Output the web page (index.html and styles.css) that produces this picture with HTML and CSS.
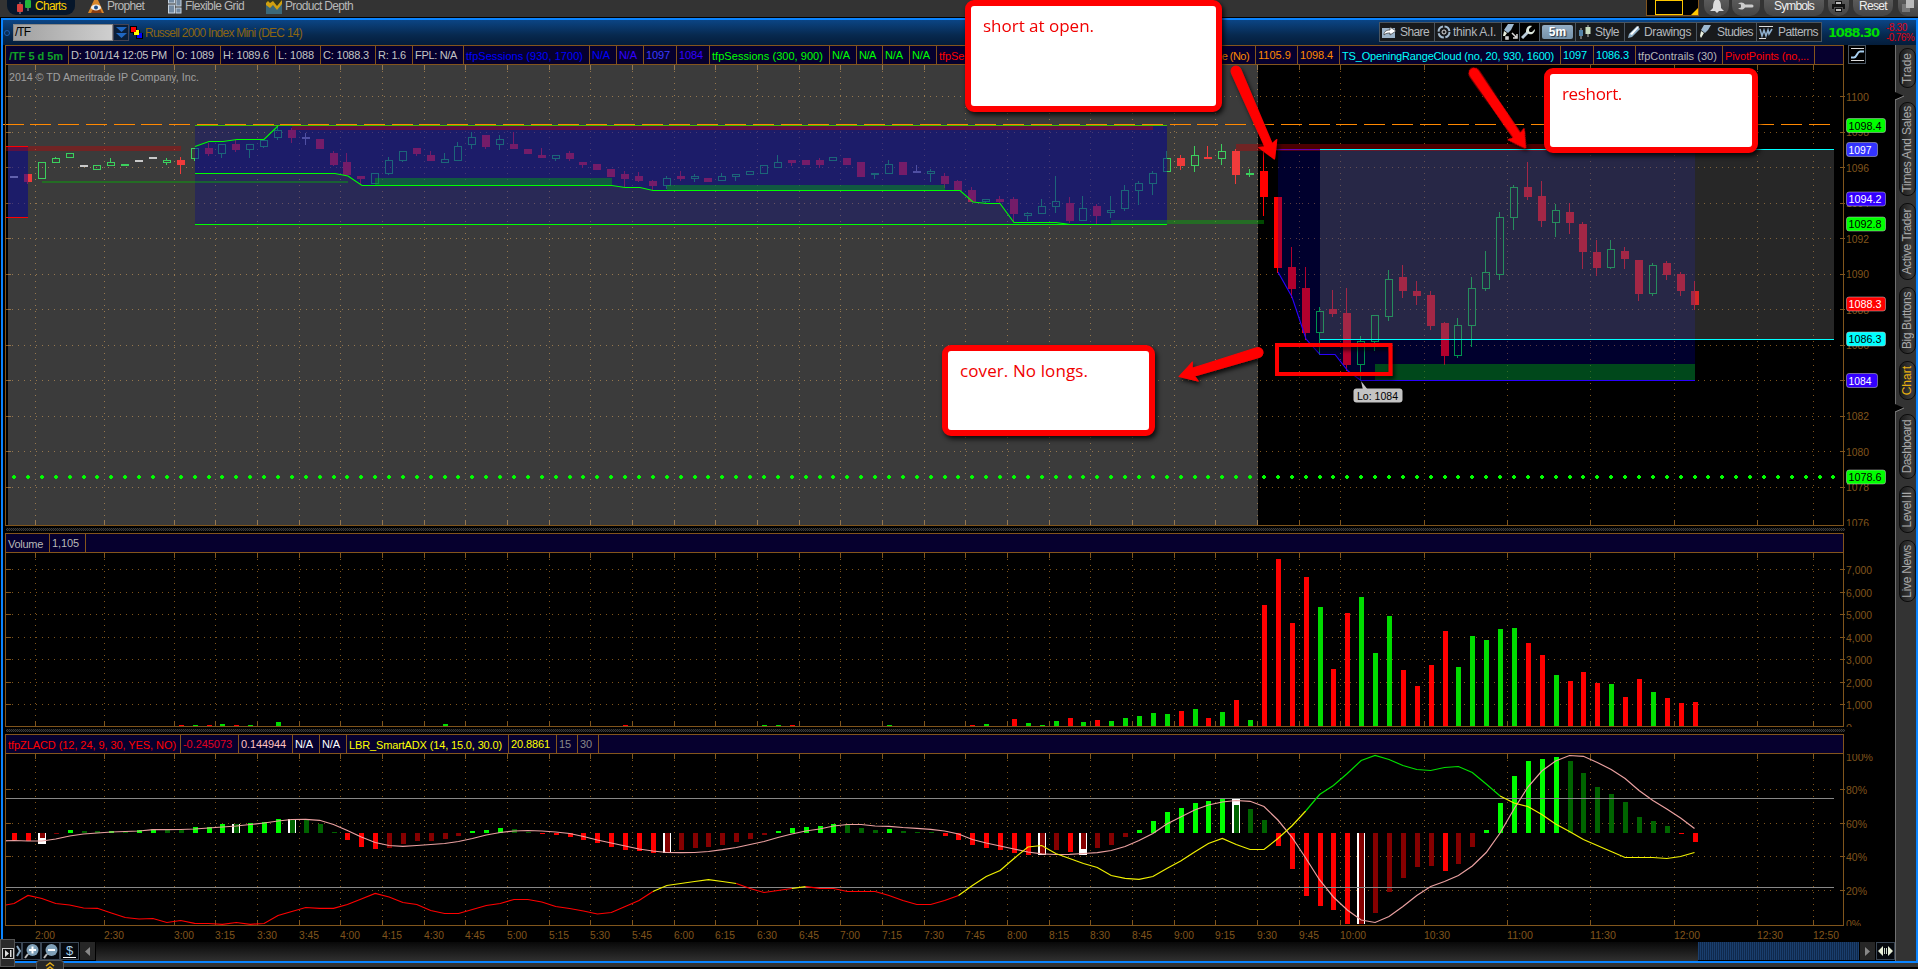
FILE: index.html
```html
<!DOCTYPE html>
<html lang="en">
<head>
<meta charset="utf-8">
<title>Charts - /TF</title>
<link rel="stylesheet" href="styles.css">
</head>
<body>
<nav class="topbar">
  <div class="tab tab-active">
    <svg width="16" height="14" viewBox="0 0 16 14"><path d="M4 2v12M12 0v11" stroke="#999"/><rect x="1" y="4" width="6" height="8" rx="1" fill="#d9403c"/><rect x="9" y="0" width="6" height="8" rx="1" fill="#22b43a"/></svg>
    <span data-w="31">Charts</span>
  </div>
  <div class="tab tab-prophet">
    <svg width="16" height="14" viewBox="0 0 16 14"><path d="M6 0h4l6 13H0z" fill="#d8862a"/><path d="M3 13l2-4h7l2 4z" fill="#8a3d10"/><ellipse cx="8" cy="7.500" rx="5" ry="3" fill="#eee"/><circle cx="8" cy="7.500" r="2" fill="#1a4a86"/></svg>
    <span data-w="37">Prophet</span>
  </div>
  <div class="tab tab-grid">
    <svg width="14" height="14" viewBox="0 0 14 14"><g fill="#7288a0" stroke="#c8d4e0"><rect x=".5" y="-2" width="6" height="5"/><rect x="8" y="-2" width="5" height="8"/><rect x=".5" y="5" width="6" height="8"/><rect x="8" y="8" width="5" height="5"/></g></svg>
    <span data-w="59">Flexible Grid</span>
  </div>
  <div class="tab tab-depth">
    <svg width="16" height="14" viewBox="0 0 16 14"><rect width="16" height="14" fill="#3c6878"/><path d="M0 0h16v3l-5 5-4-5-4 3-3-2z" fill="#33361c"/><path d="M0 3l2-2 2 2 3-2 4 5 5-6v4l-5 6-4-5-3 3-4-3z" fill="#d0a010"/></svg>
    <span data-w="68">Product Depth</span>
  </div>
  <div class="topbar-right">
    <div class="layout-box"><i></i><svg width="7" height="7"><path d="M7 0v7H0z" fill="#ffc800"/></svg></div>
    <div class="pill bell"><svg width="14" height="13" viewBox="0 0 14 13"><path d="M5 0h4c2 2 2 6 2 8l3 3H0l3-3c0-2 0-6 2-8zM5 11h4l-2 2z" fill="#ddd"/></svg></div>
    <div class="pill wrench"><svg width="18" height="8" viewBox="0 0 18 8"><path d="M1 1.500c3-2 6-1 7 1h7a1.500 1.500 0 010 3H8c-1 2-4 3-7 1l3-1V2.500z" fill="#ccc"/></svg></div>
    <div class="pill symbols"><span data-w="40">Symbols</span></div>
    <div class="pill printer"><svg width="13" height="11" viewBox="0 0 13 11"><path d="M3 0h7v3h3v5h-2V6H2v2H0V3h3zM3 7h7v4H3z" fill="#111"/><path d="M4 1h5v2H4zM4 8h5v2H4z" fill="#bbb"/></svg></div>
    <div class="pill reset"><span data-w="28">Reset</span></div>
    <div class="pill copy"><svg width="12" height="12" viewBox="0 0 12 12"><rect x="0" y="4" width="8" height="8" fill="#777"/><rect x="4" y="0" width="8" height="8" fill="#bbb"/></svg></div>
  </div>
</nav>

<main class="frame">
  <header class="titlebar">
    <i class="link-dot"></i>
    <div class="symbol-input"><span data-w="15">/TF</span></div>
    <div class="symbol-drop"><svg width="11" height="11" viewBox="0 0 11 11"><path d="M0 0h11L5.500 5zM0 6h11l-5.500 5z" fill="#1f66c0"/></svg></div>
    <svg class="squares" width="13" height="13" viewBox="0 0 13 13"><path d="M0 0h7v4h3v3h3v6H6V9H3V7H0z" fill="#000"/><path d="M1 1h5v5H1z" fill="#f00"/><path d="M6 4h3v5H4V6h2z" fill="#ff0"/><path d="M9 7h3v5H7V9h2z" fill="#00f"/></svg>
    <span class="instrument" data-w="157">Russell 2000 Index Mini (DEC 14)</span>
    <div class="toolbar">
      <div class="btn b-share"><svg width="15" height="13" viewBox="0 0 15 13"><path d="M0 2h13v10H0z" fill="#9db4c8"/><path d="M2 9c0-4 3-5 6-5V1l6 4-6 4V7C6 7 4 7 2 9z" fill="#fff" stroke="#333" stroke-width=".7"/></svg><span data-w="29">Share</span></div>
      <div class="btn b-think"><svg width="14" height="14" viewBox="0 0 14 14"><circle cx="7" cy="7" r="5.500" fill="none" stroke="#a5bcd0" stroke-width="2" stroke-dasharray="7 1.600"/><circle cx="7" cy="7" r="2" fill="#222" stroke="#ddd"/></svg><span data-w="43">think A.I.</span></div>
      <div class="btn b-icon b-flask"><svg width="15" height="16" viewBox="0 0 15 16"><path d="M5 0l6 0-3 6-3 3-4-3z" fill="#9cb8d0"/><path d="M1 7l3 2-2 3H0z" fill="#e9f0e0"/><path d="M3 15v-2h2v2zM9 9l4 4M14 10v4h-4" stroke="#ddd" stroke-width="1.500" fill="none"/></svg></div>
      <div class="btn b-icon b-key"><svg width="14" height="14" viewBox="0 0 14 14"><path d="M1 13l7-7" stroke="#b8cad8" stroke-width="3"/><path d="M11 1L8 4v3h3l3-3c0 4-3 6-6 5L5 7c0-4 2-7 6-6z" fill="#dde7dd"/></svg></div>
      <div class="btn b-time"><b>5m</b></div>
      <div class="btn b-style"><svg width="13" height="14" viewBox="0 0 13 14"><path d="M3 3v11M10 0v12" stroke="#bbb"/><rect x="1" y="5" width="4" height="6" fill="#5684a8"/><rect x="7.500" y="2" width="5" height="7" fill="#c8dcc0"/></svg><span data-w="24">Style</span></div>
      <div class="btn b-draw"><svg width="14" height="14" viewBox="0 0 14 14"><path d="M1 13l1-4 8-8 3 3-8 8z" fill="#8fb0c8"/><path d="M3 9l8-8 1 1-7 8z" fill="#fff"/></svg><span data-w="47">Drawings</span></div>
      <div class="btn b-stud"><svg width="14" height="14" viewBox="0 0 14 14"><path d="M5 0h7L9 5 6 8 2 5z" fill="#9cb8d0"/><path d="M2 6l3 2-3 5-1-2z" fill="#e9f0e0"/></svg><span data-w="36">Studies</span></div>
      <div class="btn b-patt"><svg width="14" height="13" viewBox="0 0 14 13"><path d="M0 .5h14M0 12.500h7" stroke="#ddd"/><path d="M1 3l2 7 2-6 2 6 2-6 1 4 3-5" fill="none" stroke="#8fb0d0" stroke-width="1.500"/></svg><span data-w="40">Patterns</span></div>
    </div>
    <b class="last" data-w="51">1088.30</b>
    <div class="change"><span data-w="21">-8.30</span><span data-w="28">-0.76%</span></div>
  </header>

  <div class="workspace">
    <section class="panes">
      <div class="strip"><div class="cells" id="head-price"></div>
        <div class="scale-btn"><svg width="13" height="15" viewBox="0 0 13 15"><path d="M0 1.500h13M0 13.500h13" stroke="#ddd"/><path d="M0 10.500h3c3 0 3-6 6-6h4" fill="none" stroke="#a8d0f0" stroke-width="2"/></svg></div>
      </div>
      <svg class="pane" id="price" width="1892" height="461" viewBox="3 65 1892 461"></svg>
      <div class="divider"></div>
      <div class="strip"><div class="cells" id="head-volume"></div></div>
      <svg class="pane" id="volume" width="1892" height="174" viewBox="3 553 1892 174"></svg>
      <div class="divider"></div>
      <div class="strip"><div class="cells" id="head-osc"></div></div>
      <svg class="pane" id="osc" width="1892" height="172" viewBox="3 754 1892 172"></svg>
      <svg class="pane" id="times" width="1892" height="16" viewBox="3 926 1892 16"></svg>
      <div class="scroller">
        <div class="sbtn first"><svg width="18" height="16" viewBox="0 0 18 16"><path d="M13 3l3 5-3 5" fill="none" stroke="#89a8c0" stroke-width="2"/></svg></div>
        <div class="sbtn"><svg width="16" height="16" viewBox="0 0 16 16"><circle cx="8.500" cy="7" r="6" fill="#7fa0b8"/><path d="M8.500 3.500v7M5 7h7" stroke="#fff" stroke-width="2"/><path d="M4 11l-3 4" stroke="#bbb" stroke-width="2"/></svg></div>
        <div class="sbtn"><svg width="16" height="16" viewBox="0 0 16 16"><circle cx="8.500" cy="7" r="6" fill="#7fa0b8"/><path d="M5 7h7" stroke="#fff" stroke-width="2"/><path d="M4 11l-3 4" stroke="#bbb" stroke-width="2"/></svg></div>
        <div class="sbtn dollar"><span>$</span></div>
        <div class="arrow"><svg width="5" height="9"><path d="M5 0v9L0 4.500z" fill="#888"/></svg></div>
        <div class="track"></div>
        <div class="thumb"></div>
        <div class="arrow"><svg width="5" height="9"><path d="M0 0v9l5-4.500z" fill="#888"/></svg></div>
        <div class="sbtn"><svg width="15" height="12" viewBox="0 0 15 12"><path d="M0 6l5-5v10zM15 6l-5-5v10z" fill="#e8f0d8"/><path d="M6.500 3v6M8.500 3v6" stroke="#ccd8c8"/></svg></div>
      </div>
    </section>
    <aside class="side">
      <div class="side-tab t-trade"><span>Trade</span></div>
      <svg class="notch" width="10" height="8"><path d="M0 0l9 4-9 4z" fill="#000"/><path d="M0 8l9-4" stroke="#888"/></svg>
      <div class="side-tab t-times"><span>Times And Sales</span></div>
      <div class="side-tab t-active"><span>Active Trader</span></div>
      <div class="side-tab t-big"><span>Big Buttons</span></div>
      <div class="side-tab t-chart"><span>Chart</span></div>
      <svg class="notch" width="10" height="8"><path d="M0 0l9 4-9 4z" fill="#000"/><path d="M0 8l9-4" stroke="#888"/></svg>
      <div class="side-tab t-dash"><span>Dashboard</span></div>
      <div class="side-tab t-level"><span>Level II</span></div>
      <div class="side-tab t-live"><span>Live News</span></div>
    </aside>
  </div>
</main>
<footer class="footer"></footer>

<div class="nub"><svg width="12" height="11" viewBox="0 0 12 11"><rect x=".5" y=".5" width="11" height="10" fill="#111" stroke="#ccc"/><path d="M3 2v7l4-3.500zM8 2h1.500v7H8z" fill="#ddd"/></svg></div>
<div class="drawer"><svg width="10" height="8" viewBox="0 0 10 8"><path d="M1 4l4-3 4 3M1 8l4-3 4 3" fill="none" stroke="#e0a818" stroke-width="1.500"/></svg></div>

<svg class="ink" id="ink" width="1918" height="969" viewBox="0 0 1918 969"></svg>
<div class="note note-open"><span data-w="111">short at open.</span></div>
<div class="note note-cover"><span data-w="128">cover. No longs.</span></div>
<div class="note note-reshort"><span data-w="60">reshort.</span></div>
<script src="script.js"></script>
</body>
</html>
```
FILE: styles.css
```css
* { box-sizing: border-box; }
body {
  margin: 0; width: 1918px; height: 969px; overflow: hidden; position: relative;
  display: flex; flex-direction: column; background: #000;
  font: 11px/14px "Liberation Sans", Arial, sans-serif; color: #c4c4c4;
}
svg { display: block; flex: none; }
span, b { white-space: pre; }

.topbar { height: 18px; flex: none; display: flex; align-items: flex-start; background: #333; border-bottom: 1px solid #000; padding-left: 7px; font-size: 12px; line-height: 13px; color: #b8b8b8; }
.tab { display: flex; height: 15px; gap: 3px; }
.tab-active { width: 68px; padding-left: 9px; background: #06162a; border-radius: 0 0 9px 9px; color: #ffd200; }
.tab-prophet { width: 93px; padding-left: 13px; }
.tab-grid { width: 98px; }
.topbar-right { margin-left: auto; display: flex; color: #eee; }
.layout-box { width: 53px; height: 16px; margin-right: 5px; background: #000; border: 1px solid #84551c; border-top: 0; display: flex; justify-content: flex-end; align-items: flex-end; }
.layout-box i { width: 28px; height: 15px; border: 1px solid #ffc800; margin-right: 8px; }
.pill { height: 16px; background: linear-gradient(#5a5a5a, #454545); border-radius: 0 0 10px 10px; display: flex; justify-content: center; }
.bell { width: 25px; margin-right: 3px; }
.wrench { width: 28px; margin-right: 4px; padding-top: 2px; }
.symbols { width: 60px; margin-right: 4px; border-radius: 0 0 9px 9px; }
.printer { width: 21px; margin-right: 4px; padding-top: 1px; }
.reset { width: 40px; margin-right: 5px; }
.copy { width: 20px; border-radius: 0 0 0 9px; }

.frame { height: 945px; flex: none; margin-left: 1px; border: 2px solid #0a84ff; width: 1917px; background: #000; }
.titlebar { height: 25px; display: flex; align-items: center; background: linear-gradient(#0b4585, #07294f 60%, #041d3b); }
.link-dot { width: 6px; height: 6px; margin: 0 3px 0 1px; border: 1px solid #1c5fb4; border-radius: 50%; }
.symbol-input { width: 100px; height: 17px; background: linear-gradient(90deg, #a0a0a0, #cfcfcf); border: 1px solid #888; color: #000; font: 12px/15px "Liberation Sans", Arial, sans-serif; padding-left: 1px; }
.symbol-drop { width: 16px; height: 17px; background: #0a1e38; border: 1px solid #445; display: flex; align-items: center; justify-content: center; }
.squares { margin: 0 2px 0 1px; }
.instrument { color: #8c6512; font-size: 12px; }
.toolbar { margin-left: auto; display: flex; height: 20px; margin-bottom: 1px; }
.btn { border: 1px solid #4a5560; background: #181a1c; display: flex; align-items: center; color: #b4b8bc; font-size: 12px; padding-left: 2px; gap: 3px; }
.btn:not(:last-child) { border-right: 0; }
.b-share { width: 55px; }
.b-think { width: 67px; gap: 2px; }
.b-icon { width: 18px; padding-left: 1px; background: #000; }
.b-key { width: 20px; }
.b-time { width: 36px; padding: 0 2px; }
.b-time b { width: 31px; height: 14px; border-radius: 2px; background: linear-gradient(#93adc4, #7592aa); color: #fff; text-align: center; line-height: 14px; font-size: 12px; text-shadow: 1px 1px 1px #234; }
.b-style { width: 49px; gap: 4px; }
.b-draw { width: 72px; }
.b-stud { width: 60px; gap: 4px; }
.b-patt { width: 66px; gap: 5px; }
.last { margin: 0 7px 0 6px; color: #00dc00; font: bold 13px/20px "DejaVu Sans", sans-serif; width: 51px; }
.change { width: 30px; color: #e00010; font-size: 10px; line-height: 10px; display: flex; flex-direction: column; align-items: flex-start; }

.workspace { display: flex; height: 916px; }
.panes { width: 1892px; display: flex; flex-direction: column; }
.strip { height: 20px; flex: none; display: flex; padding-left: 2px; }
.cells { width: 1839px; height: 20px; display: flex; background: #06002e; border: 1px solid #84551c; overflow: hidden; }
.cell { flex: none; height: 18px; line-height: 19px; border-right: 1px solid #84551c; padding-left: 2px; overflow: hidden; }
.cell.study { line-height: 20px; }
.cell.strong { font-weight: bold; padding-left: 3px; line-height: 20px; }
.scale-btn { margin-left: 4px; width: 18px; height: 19px; border: 1px solid #4a5560; display: flex; align-items: center; justify-content: center; }
.divider { height: 7px; width: 1842px; flex: none; border: 2px solid #000; border-left: 3px solid #000; border-right: 0; background: repeating-conic-gradient(#3c3c3c 0 25%, #101010 0 50%) 0 0 / 2px 2px; }
.pane { font-size: 11px; }

.scroller { height: 19px; display: flex; background: #000; }
.sbtn { width: 19px; height: 18px; border: 1px solid #3a4654; background: #06090e; display: flex; align-items: center; justify-content: center; }
.dollar span { font-size: 13px; line-height: 13px; color: #a8d0ea; border-bottom: 1px solid #fff; padding: 0 3px; }
.arrow { width: 15px; height: 18px; margin: 0 1px; background: #262626; display: flex; align-items: center; justify-content: center; }
.track { flex: 1; background: linear-gradient(#080808, #303030); }
.thumb { width: 161px; height: 18px; background: repeating-linear-gradient(90deg, #1a3f6e 0 1px, #10294c 1px 2px); }

.side { width: 21px; background: #333; border-left: 1px solid #707070; padding-top: 3px; display: flex; flex-direction: column; align-items: flex-end; }
.side-tab { width: 17px; border: 1px solid #0c0c0c; border-radius: 8px; background: linear-gradient(90deg, #1a1a1a, #3c3c3c 80%, #2a2a2a); display: flex; align-items: center; justify-content: center; margin-bottom: 7px; color: #a8a8a8; flex: none; }
.side-tab span { writing-mode: vertical-rl; transform: rotate(180deg); font-size: 12px; line-height: 15px; }
.notch { align-self: flex-start; margin: -3px 0 2px -1px; }
.t-trade { height: 40px; } .t-times { height: 94px; } .t-active { height: 77px; } .t-big { height: 67px; }
.t-chart { height: 39px; } .t-chart span { color: #e8b010; }
.t-dash { height: 65px; } .t-level { height: 47px; } .t-live { height: 62px; }
.t-times span { letter-spacing: -.2px; } .t-active span { letter-spacing: -.4px; } .t-big span { letter-spacing: -.4px; }
.t-dash span { letter-spacing: -.6px; } .t-level span { letter-spacing: -.4px; } .t-live span { letter-spacing: -.3px; }

.footer { height: 4px; flex: none; background: #333; }
.nub { position: absolute; left: 0; top: 939px; width: 15px; height: 28px; background: #2a2a2a; border: 1px solid #555; display: flex; align-items: center; justify-content: center; }
.drawer { position: absolute; left: 36px; top: 960px; width: 28px; height: 9px; background: #262626; border: 1px solid #555; border-bottom: 0; border-radius: 4px 4px 0 0; display: flex; justify-content: center; padding-top: 1px; }
.ink { position: absolute; left: 0; top: 0; }
.note { position: absolute; background: #fff; border: 6px solid #f00; border-radius: 9px; box-shadow: 2px 3px 5px rgba(0,0,0,.8); color: #f00000; font: 17px/22px "Open Sans", "Noto Sans", sans-serif; padding: 9px 12px; }
.note-open { left: 965px; top: 0; width: 257px; height: 112px; }
.note-cover { left: 942px; top: 345px; width: 213px; height: 91px; }
.note-reshort { left: 1544px; top: 68px; width: 214px; height: 85px; }
```
FILE: script.js
```js
var BROWN = '#80551c', SHADED = 'rgba(204,204,204,.29)';

// Bar index 0 is the 9:30 bar.
function bx(k) { return Math.round(1264 + 13.888 * k); }

function tag(name, attrs, body) {
  var s = '<' + name;
  for (var a in attrs) s += ' ' + a + '="' + attrs[a] + '"';
  return s + '>' + (body || '') + '</' + name + '>';
}
function rect(x, y, w, h, fill) { return tag('rect', {x: x, y: y, width: w, height: h, fill: fill, 'shape-rendering': 'crispEdges'}); }
function poly(points, stroke, w) { return tag('polyline', {points: points, fill: 'none', stroke: stroke, 'stroke-width': w || 1.1}); }
function text(x, y, str, len, fill) {
  return tag('text', {x: x, y: y, fill: fill || BROWN, textLength: len, lengthAdjust: 'spacingAndGlyphs'}, str);
}

/* ---- study header cells: label, right edge, colour ---- */
function cells(id, list) {
  var left = 5, html = '';
  list.forEach(function (c, i) {
    var w = c[1] - left - (i === 0 ? 1 : 0);
    var kind = c[3] ? ' strong' : /^(tfp|TS_|LBR|Pivot|Vol)/.test(c[0]) ? ' study' : '';
    html += '<div class="cell' + kind + '" style="width:' + w + 'px;color:' + c[2] + '"><span data-w="' + (c[4] || c[1] - left - 9) + '">' + c[0] + '</span></div>';
    left = c[1];
  });
  document.getElementById(id).innerHTML = html;
}
var B = '#0000ff', G = '#00ff00', O = '#ff8800', C = '#00ffff', L = '#c4c4c4';
cells('head-price', [
  ['/TF 5 d 5m', 69, '#12a028', 1, 54], ['D: 10/1/14 12:05 PM', 174, L], ['O: 1089', 221, L], ['H: 1089.6', 276, L],
  ['L: 1088', 321, L], ['C: 1088.3', 376, L], ['R: 1.6', 413, L], ['FPL: N/A', 464, L],
  ['tfpSessions (930, 1700)', 590, B], ['N/A', 617, B], ['N/A', 644, '#3300ff'], ['1097', 677, '#3a3aff'], ['1084', 710, '#3300ff'],
  ['tfpSessions (300, 900)', 830, G], ['N/A', 857, G], ['N/A', 883, G], ['N/A', 910, G], ['N/A', 937, G],
  ['tfpSessions', 1004, '#f00', 0, 56], ['', 1116, '#f00'], ['TS_OvernightRangeLine (No)', 1256, O, 0, 131],
  ['1105.9', 1298, O], ['1098.4', 1340, O], ['TS_OpeningRangeCloud (no, 20, 930, 1600)', 1561, C], ['1097', 1594, C], ['1086.3', 1636, C],
  ['tfpContrails (30)', 1723, '#b8b8b8', 0, 79], ['PivotPoints (no,...', 1815, '#f00', 0, 84]
]);
cells('head-volume', [['Volume', 50, '#b8b8b8', 0, 35], ['1,105', 86, '#b8b8b8', 0, 27]]);
cells('head-osc', [
  ['tfpZLACD (12, 24, 9, 30, YES, NO)', 181, '#f00', 0, 168], ['-0.245073', 239, '#e00020'], ['0.144944', 293, '#ffc0c0'], ['N/A', 320, '#fff'], ['N/A', 347, '#fff'],
  ['LBR_SmartADX (14, 15.0, 30.0)', 509, '#ff0'], ['20.8861', 557, '#ff0'], ['15', 578, '#888'], ['30', 599, '#888']
]);

/* ---- time grid shared by all panes ---- */
var times = [['2:00', -88], ['2:30', -83]];
for (var m = 180, k0 = -78; m <= 600; m += 15, k0 += 3) times.push([Math.floor(m / 60) + ':' + ('0' + m % 60).slice(-2), k0]);
times.push(['10:30', 12], ['11:00', 18], ['11:30', 24], ['12:00', 30], ['12:30', 36], ['12:50', 40]);
function grid(top, bottom, rows) {
  var s = '';
  rows.forEach(function (y) {
    s += '<path d="M6 ' + y + '.5H1835" stroke="' + BROWN + '" stroke-dasharray="1 5" shape-rendering="crispEdges"/>';
    s += rect(6, y, 5, 1, BROWN) + rect(1840, y, 5, 1, BROWN);
  });
  times.forEach(function (t) {
    var x = bx(t[1]) - 6.5;
    s += '<path d="M' + x + ' ' + (top + 6) + 'V' + bottom + '" stroke="' + BROWN + '" stroke-dasharray="1 5" shape-rendering="crispEdges"/>';
    s += rect(x - .5, top, 1, 5, BROWN) + rect(x - .5, bottom - 5, 1, 5, BROWN);
  });
  return s;
}
function edges(top, bottom) {
  return rect(5, top, 1, bottom - top, BROWN) + rect(1843, top, 1, bottom - top, BROWN) + rect(5, bottom - 1, 1839, 1, BROWN);
}

/* ---- candles from bar -90: type, body top, body bottom, wick top, wick bottom ---- */
var candles = ('d176,178 r174,182,174,184 g162,179 g158,163,157 g153,158 d165,167 g165,170 g162,166,158 f164,166 d160,162 d157,159 g160,163,158,165 r160,165,157,174 ' +
 'g148,159,148,161 r148,154,143,156 g144,154,144,158 r144,150,140,152 g144,150,144,158 g140,147,140,148 g130,138,126,140 r130,138,128,143 e137,139,133,145 r139,149 r153,165,151,166 r162,175,153,175 r176,179,176,184 ' +
 'g173,184 g160,174,157,175 g151,161,151,162 r148,154,148,156 r155,161,151 g159,163,153 g146,161,142 g137,145,132,149 r135,147,135,149 g139,145,135,150 r144,149,132 r149,154 r155,158,148 g155,159,155,161 r153,159,151,161 ' +
 'r162,165,162,168 r164,170 r169,177 r174,179,171,187 r176,181,172,182 r181,186,180,190 g178,186,176,189 r176,179,171,181 g176,179,174,182 r178,182 g176,181,173 g174,177,174,181 g171,175 g165,174 g162,168,155 r160,163,160,166 r160,165 r160,165,158,168 ' +
 'g157,161 r158,165 r162,177 f173,175,173,179 g164,174,160 r162,175 e171,173,165 g171,174,169,182 r176,184,173,188 r181,191,180 r190,202,187 g199,202,199,203 r199,202,196,203 r199,214,197,222 g213,216,212,221 g206,214,199 g201,207,176,213 ' +
 'r203,221,197,223 g208,221,196 r206,216,204,224 g210,213,196,218 g190,209,185,211 g183,191,181,205 g173,184,171,195 g158,172,151 r158,166,155,170 g155,166,146,172 r157,159,146 g151,159,144,165 r151,175,149,184 f173,175,169,177 ' +
 'r171,197,152,216 r197,268,197,273 r267,289,247,298 r288,333,267,340 g311,333,307,355 r309,314,290,317 r313,365,288,371 g341,365,336,381 g315,342,315,351 g279,317,270,321 r277,291,265,298 r291,296,281,305 r295,326,291,330 r323,356,322,365 ' +
 'g325,356,318,358 g288,326,277,347 g272,289,251,291 g217,275,212,280 g187,218,185,230 r187,197,162,200 r196,221,181,227 g210,223,204,237 r212,223,203,234 r224,252,222,269 r252,268,240,276 g249,268,240,269 r251,259,247,269 r260,294,260,301 ' +
 'g265,294,263,296 r263,275,261,280 r274,291,272,296 r291,305,281,310').split(' ');
function drawCandles() {
  var colors = {r: '#f00', g: '#00d230', f: '#00d230', d: '#c8c8c8', e: '#9494a8'}, s = '';
  candles.forEach(function (c, i) {
    var v = c.slice(1).split(',').map(Number), t = c[0], x = bx(i - 90), col = colors[t];
    var hi = v[2] || v[0], lo = v[3] || v[1];
    s += rect(x - 1, hi, 1, v[0] - hi, col) + rect(x - 1, v[1], 1, lo - v[1], col);
    if (t === 'g') s += tag('rect', {x: x - 3.5, y: v[0] + .5, width: 7, height: v[1] - v[0] - 1, fill: 'none', stroke: col, 'shape-rendering': 'crispEdges'});
    else s += rect(x - 4, v[0], 8, v[1] - v[0], col);
  });
  return s;
}

/* ---- price pane ---- */
(function () {
  var rows = [96, 132, 167, 203, 238, 274, 309, 345, 380, 416, 451, 487], s = '';
  s += grid(65, 525, rows);
  s += drawCandles();
  s += rect(8, 65, 1250, 460, SHADED);
  s += text(9, 81, '2014 © TD Ameritrade IP Company, Inc.', 190, '#a0a0a0');
  var blue = 'rgba(0,0,150,.3)';
  s += rect(8, 146, 20, 71, blue) + rect(8, 146, 20, 71, blue) + rect(195, 125, 972, 99, blue);
  var low = '195,173.5 335,173.5 348,176 362,185.500 612,185.500 625,187.500 640,187.500 653,190.500 960,190.500 973,202 987,203.500 1000,203.500 1014,222.500 1056,222.500 1070,224.500';
  var high = '195,146.500 209,141.500 223,141.500 237,139.500 264,139.500 278,126';
  s += tag('polygon', {points: high + ' 1167,126 1167,224 ' + low.split(' ').reverse().join(' '), fill: blue});
  var right = '1278,272 1292,297 1306,339 1320,354.500 1335,354.500 1348,371 1361,380.500 1695,380.500';
  s += tag('polygon', {points: '1278,149 ' + right + ' 1695,149', fill: blue});
  s += rect(1320, 149, 514, 190, 'rgba(130,130,130,.3)');
  var red = 'rgba(200,0,0,.38)', green = 'rgba(0,190,0,.38)';
  s += rect(6, 146, 175, 5, red) + rect(292, 126, 861, 4, red) + rect(1236, 144, 459, 7, red);
  s += rect(42, 181, 306, 2, green) + rect(375, 178, 237, 7, green) + rect(667, 185, 278, 5, green) + rect(1111, 220, 153, 4, green) + rect(1375, 364, 320, 16, green);
  s += poly(right, '#2a00ff') + rect(1264, 149, 56, 1, '#6a00b4');
  s += rect(1320, 149, 514, 1, '#00ffff') + rect(1320, 339, 514, 1, '#00ffff');
  s += rect(6, 146, 22, 1, '#f00') + rect(6, 217, 22, 1, '#f00');
  s += '<path d="M2.500 124.500H1835" stroke="#ff8800" stroke-dasharray="21 6.790" shape-rendering="crispEdges"/>';
  s += rect(195, 125, 972, 1, '#40c000') + rect(195, 224, 972, 1, G);
  s += poly(low, G) + poly(high, G);
  for (var k = -90; k <= 41; k++) s += rect(bx(k) - 2, 476, 4, 2, G) + rect(bx(k) - 1, 475, 2, 4, G);
  s += edges(65, 526);
  for (var p = 1100; p >= 1076; p -= 2) s += text(1846, Math.round(96.6 + (1100 - p) * 17.75) + 4, p, 23);
  [['1098.4', 125.5, G, '#000'], ['1097', 149.5, '#3333ff', '#fff'], ['1094.2', 199, '#3300ff', '#fff'], ['1092.8', 224, G, '#000'], ['1088.3', 304, '#f00', '#fff'], ['1086.3', 339, '#0ff', '#000'], ['1084', 380.5, '#3300ff', '#fff'], ['1078.6', 477, G, '#000']].forEach(function (t) {
    var long = t[0].length > 4;
    s += tag('rect', {x: 1846.5, y: t[1] - 7, width: long ? 39 : 31, height: 14, rx: 2.5, fill: t[2], stroke: 'rgba(200,200,200,.5)'});
    s += text(1848.5, t[1] + 4, t[0], long ? 33 : 23, t[3]);
  });
  s += '<path d="M1361 381l2 9h5z" fill="#c4c4c4"/>' + tag('rect', {x: 1353.5, y: 388.5, width: 49, height: 14, rx: 3, fill: '#c4c4c4'}) + text(1357, 400, 'Lo: 1084', 41, '#000');
  document.getElementById('price').innerHTML = s;
})();

/* ---- volume pane: bar tops ---- */
(function () {
  var s = grid(553, 726, [569, 592, 614, 637, 659, 682, 704]);
  var early = {'-78': 'r725', '-77': 'g725', '-76': 'r725', '-75': 'g724', '-74': 'r725', '-73': 'g725', '-71': 'g722', '-59': 'g724', '-46': 'r725', '-36': 'g725', '-35': 'g725', '-34': 'r725', '-27': 'g725', '-21': 'r725', '-20': 'g724'};
  var late = 'r719 g723 g725 g721 r718 g722 r720 g721 g718 g716 g713 g714 r711 g709 r718 g712 r700 g720 r605 r559 r623 r577 g607 r669 r613 g597 g653 g616 r670 r686 r665 r631 g667 g636 g640 g629 g628 r643 r655 g675 r681 r672 r683 g684 r697 r679 g692 r698 r703 r702'.split(' ');
  function bar(k, v) { var y = +v.slice(1); s += rect(bx(k) - 2, y, 5, 726 - y, v[0] === 'r' ? '#f00' : '#00dc00'); }
  for (var k in early) bar(+k, early[k]);
  late.forEach(function (v, i) { bar(i - 18, v); });
  s += edges(553, 727);
  [569, 592, 614, 637, 659, 682, 704].forEach(function (y, i) { s += text(1846, y + 5, (7 - i) + ',000', 26); });
  s += text(1846, 732, '0', 6);
  document.getElementById('volume').innerHTML = s;
})();

/* ---- oscillator pane. R/G rising, r/g fading, w = marked bar (outer:inner) ---- */
(function () {
  var s = grid(754, 925, [789, 823, 856, 890]);
  var bars = ('R840 R841 wr844:838 r834 G830 g831 g831 G831 g831 G830 G829 g829 g830 G827 G827 G824 wg824:824 G823 G822 G819 wg819:819 g820 g824 g832 R840 R847 R849 r848 r844 r841 r841 r839 r836 G831 G830 G828 g829 g832 R834 R835 R837 R840 R843 R847 R850 R851 ' +
   'R853 wr853:852 r850 r848 r847 r845 r842 r839 r835 G831 G828 G827 G826 G824 g824 g828 g830 G829 g831 g832 g832 R836 R840 R845 R848 R850 R853 R855 wr855:854 r850 R852 wr855:849 r848 r845 r837 G830 G821 G812 G808 G803 G801 G799 wg799:805 g809 g820 ' +
   'R846 R869 R896 R906 R910 R924 wr924:924 r913 r892 r878 r867 r866 R871 r864 r847 G830 G803 G776 G761 G759 G757 g761 g773 g787 g794 g802 g817 g821 g826 R834 R842').split(' ');
  var col = {R: '#f00', r: '#850000', G: G, g: '#006400'};
  function bar(x, w, y, c) { s += rect(x, Math.min(y, 833), w, Math.abs(y - 833), c); }
  bars.forEach(function (b, i) {
    var x = bx(i - 90);
    if (b[0] === 'w') { var v = b.slice(2).split(':'); bar(x - 4, 8, +v[0], '#fff'); bar(x - 2, 5, +v[1], col[b[1]]); }
    else bar(x - 2, 5, +b.slice(1), col[b[0]]);
  });
  function line(first, vals, color) {
    return poly(vals.map(function (v, i) { return (1264 + 13.888 * (first + i)).toFixed(1) + ',' + v; }).join(' '), color, 1.2);
  }
  var pink = [841,840.5,841,841,839,836,834,833,832,831.5,831,829.7,829.6,829.5,829,828,827,826,824.5,823,821,819.5,819.3,820.3,824.5,830.5,837,842.5,845.5,846.3,845.5,844.5,843.5,841.5,838.5,835,832.5,831,830.5,831,832,833.5,836.5,840,843,846,849,
    851,852.5,852.6,852.5,851.5,849.7,847.5,844.5,841.5,837.5,834,831,829,826,824.5,824.5,826,826.3,827.5,828.3,829.3,831,834,839.5,843,846,849,852,853.8,854.5,854.3,853.5,852.7,850.5,846.5,840.5,833.5,824,817,810,805,802,800.5,801.3,806.5,
    820,837,858,880,897,910,920,922.5,916.5,906.5,895.5,886.5,881.5,875.5,866,852.5,833,809,787,771,761,755.5,756.3,762.5,769.5,778.5,790.5,800.5,809,818,828.5];
  var adx = [906,903.5,895.5,898.5,903.5,905,908,908.3,913,917.5,919,918.5,922.5,920.5,923.3,923.5,924.3,922.5,924.3,923.5,915.5,911.5,907.5,908.3,908.3,904.5,899,893.5,897,902.5,904.5,910.5,913.5,913.5,909.5,905.5,903.5,899.5,899.5,902,906.5,908.5,911,914,912.5,906.5,900.5,
    891.5,885.5,883.5,881.5,879.7,881.5,883.5,888.5,892.5,890.5,888.5,886.7,888.3,888.5,891.5,891.5,891.5,895.5,900.5,904.5,904.5,900.5,895.5,885.5,876.5,870.5,858.5,847,845.5,853.5,858.5,863.5,867.5,875.5,878.3,879.3,876.5,868.5,861,852,843.5,838.5,844.5,849.5,849.5,
    838.5,826,811,794.5,785.5,773.5,760.5,755.5,759.5,765.5,769.5,770.5,767.5,766.5,772.5,784,796,803,806.5,814.5,824,831.5,839.5,845.5,851.5,857.5,857.5,857.5,858.5,856.5,852.5];
  s += rect(6, 798, 1828, 1, '#888') + rect(6, 887, 1828, 1, '#888');
  s += line(-91, pink, '#eaa0a0');
  [[-91, -44, '#f00'], [-44, -38, '#f0f000'], [-38, -34, '#f00'], [-34, -33, '#f0f000'], [-33, -22, '#f00'], [-22, 3, '#f0f000'], [3, 17, '#00e000'], [17, 31, '#f0f000']].forEach(function (g) {
    s += line(g[0], adx.slice(g[0] + 91, g[1] + 92), g[2]);
  });
  s += rect(3, 754, 2, 172, '#000') + edges(754, 926);
  s += text(1846, 761, '100%', 27) + text(1846, 794, '80%', 21) + text(1846, 828, '60%', 21) + text(1846, 861, '40%', 21) + text(1846, 895, '20%', 21) + text(1846, 928, '0%', 15);
  document.getElementById('osc').innerHTML = s;
})();

document.getElementById('times').innerHTML = times.map(function (t) {
  return text(bx(t[1]) - 7, 939, t[0], t[0].length > 4 ? 26 : 20);
}).join('');

/* ---- hand-drawn arrows and box ---- */
(function () {
  function arrow(x0, y0, x1, y1) {
    var len = Math.hypot(x1 - x0, y1 - y0), a = Math.atan2(y1 - y0, x1 - x0) * 180 / Math.PI, n = -len;
    return '<path transform="translate(' + x1 + ' ' + y1 + ') rotate(' + a + ')" d="M0 0L-17 10L-15 4L' + n + ' 5A5 5 0 0 1 ' + n + ' -5L-15 -4L-17 -10Z" fill="#f00" stroke="#f00" stroke-linejoin="round"/>';
  }
  var s = '<defs><filter id="soft" x="-20%" y="-20%" width="150%" height="150%"><feDropShadow dx="2" dy="3" stdDeviation="2" flood-color="#000" flood-opacity=".8"/></filter></defs>';
  s += '<g filter="url(#soft)">' + arrow(1236, 71, 1274.5, 159) + arrow(1474, 73, 1525.5, 148) + arrow(1258, 352.5, 1179, 376.5) + '<rect x="1277" y="345" width="113.500" height="29" fill="none" stroke="#f00" stroke-width="4"/></g>';
  document.getElementById('ink').innerHTML = s;
})();

/* ---- tighten or loosen each label to its slot ---- */
document.querySelectorAll('[data-w]').forEach(function (el) {
  if (!el.textContent) return;
  var r = document.createRange();
  r.selectNodeContents(el);
  el.style.letterSpacing = ((el.dataset.w - r.getBoundingClientRect().width) / el.textContent.length).toFixed(3) + 'px';
});
```
